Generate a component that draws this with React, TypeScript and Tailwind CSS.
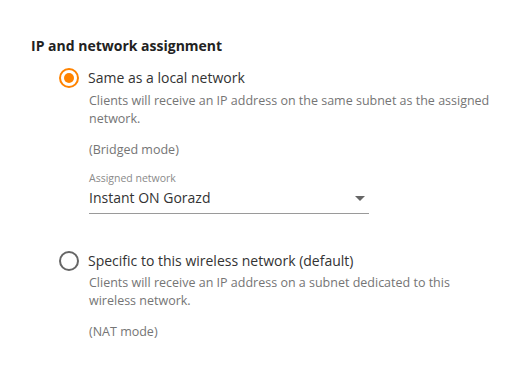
export default function App() {
  return (
    <div className="min-h-[368px] w-[518px] bg-white pl-[31px] pt-[36px] text-[#333]" style={{ fontFamily: '"Open Sans", sans-serif' }}>
      <h2 className="text-[14px] font-bold leading-[20px] text-[#222]">IP and network assignment</h2>

      <div className="ml-[28px]">
        {/* Bridged */}
        <div className="mt-[12px] flex items-center gap-[9px]">
          <span className="flex h-[20px] w-[20px] items-center justify-center rounded-full border-2 border-[#ff8300]">
            <span className="h-[10px] w-[10px] rounded-full bg-[#ff8300]"></span>
          </span>
          <span className="text-[14px] leading-[20px]">Same as a local network</span>
        </div>
        <div className="pl-[30px]">
          <p className="mt-[4px] w-[406px] text-[12.5px] leading-[18px] text-[#757575]">
            Clients will receive an IP address on the same subnet as the assigned network.
          </p>
          <p className="mt-[13px] text-[12.5px] leading-[18px] text-[#757575]">(Bridged mode)</p>
          <div className="mt-[12px] text-[10.5px] leading-[14px] text-[#8a8a8a]">Assigned network</div>
          <div className="mt-[3px] flex w-[280px] items-center justify-between border-b border-[#9a9a9a] pb-[5px]">
            <span className="text-[14px] leading-[20px]">Instant ON Gorazd</span>
            <svg width="10" height="5" viewBox="0 0 10 5" className="mr-[4px]">
              <path d="M0 0 H10 L5 5 Z" fill="#666" />
            </svg>
          </div>
        </div>

        {/* NAT */}
        <div className="mt-[37px] flex items-center gap-[9px]">
          <span className="h-[20px] w-[20px] rounded-full border-2 border-[#666]"></span>
          <span className="text-[14px] leading-[20px]">Specific to this wireless network (default)</span>
        </div>
        <div className="pl-[30px]">
          <p className="mt-[3px] w-[406px] text-[12.5px] leading-[18px] text-[#757575]">
            Clients will receive an IP address on a subnet dedicated to this wireless network.
          </p>
          <p className="mt-[13px] text-[12.5px] leading-[18px] text-[#757575]">(NAT mode)</p>
        </div>
      </div>
    </div>
  );
}
